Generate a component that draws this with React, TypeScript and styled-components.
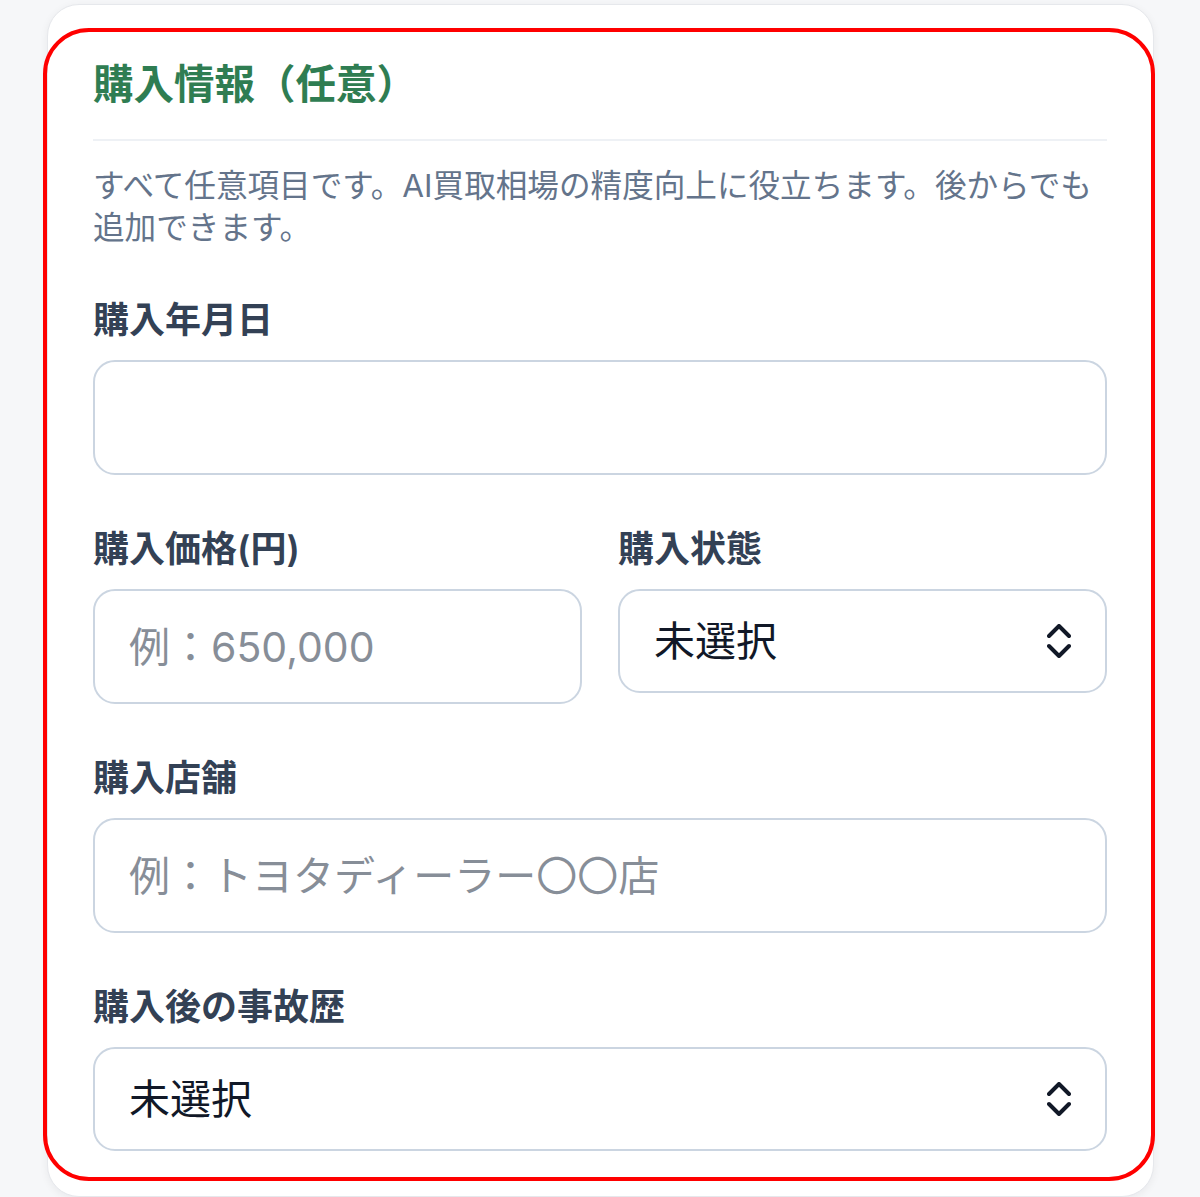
import React from "react";
import styled, { createGlobalStyle } from "styled-components";

const GlobalStyle = createGlobalStyle`
  html, body {
    margin: 0;
    padding: 0;
    background: #f6f7f9;
  }
  body {
    font-family: Inter, "Noto Sans CJK JP", sans-serif;
  }
  * { box-sizing: border-box; }
`;

const Card = styled.section`
  position: relative;
  margin: 4px 46px 0 47px;
  background: #ffffff;
  border: 1px solid #e6e8ec;
  border-radius: 32px;
  box-shadow: 0 2px 8px rgba(15, 23, 42, 0.06);
  padding: 55px 46px 45px 45px;
`;

const Highlight = styled.div`
  position: absolute;
  left: -5px;
  top: 23px;
  right: -2px;
  bottom: 15px;
  border: 4px solid #ff0000;
  border-radius: 46px;
  pointer-events: none;
`;

const Title = styled.h2`
  margin: 0;
  font-size: 40.5px;
  line-height: 50px;
  font-weight: 700;
  color: #2f7d52;
  padding-bottom: 29px;
  border-bottom: 2px solid #eef1f5;
`;

const Description = styled.p`
  margin: 24px 0 0;
  font-size: 31.6px;
  line-height: 42px;
  color: #64748b;
`;

const Form = styled.div`
  display: grid;
  row-gap: 49px;
  margin-top: 46px;
`;

const Row = styled.div`
  display: grid;
  grid-template-columns: 1fr 1fr;
  column-gap: 36px;
`;

const Field = styled.div`
  display: flex;
  flex-direction: column;
  gap: 15px;
  min-width: 0;
`;

const Label = styled.label`
  font-size: 36px;
  line-height: 50px;
  font-weight: 600;
  color: #334155;
`;

const TextInput = styled.input`
  width: 100%;
  height: 115px;
  border: 2px solid #cbd5e1;
  border-radius: 22px;
  background: #ffffff;
  padding: 0 34px;
  font-family: inherit;
  font-size: 41px;
  color: #111827;
  outline: none;
  &::placeholder {
    color: #878e98;
  }
`;

const SelectWrap = styled.div`
  position: relative;
  width: 100%;
`;

const Select = styled.select`
  width: 100%;
  height: 104px;
  appearance: none;
  -webkit-appearance: none;
  border: 2px solid #cbd5e1;
  border-radius: 22px;
  background: #ffffff;
  padding: 0 80px 0 34px;
  font-family: inherit;
  font-size: 41px;
  color: #111827;
  outline: none;
`;

const ChevronIcon = styled.svg`
  position: absolute;
  right: 36px;
  top: 50%;
  transform: translateY(-50%);
  pointer-events: none;
`;

const Chevrons = () => (
  <ChevronIcon
    width="24"
    height="34"
    viewBox="0 0 24 34"
    fill="none"
    stroke="#111827"
    strokeWidth="4"
    strokeLinecap="round"
    strokeLinejoin="round"
  >
    <path d="M2 12 L12 2 L22 12" />
    <path d="M2 22 L12 32 L22 22" />
  </ChevronIcon>
);

const SelectBox: React.FC<{ options: string[] }> = ({ options }) => (
  <SelectWrap>
    <Select defaultValue={options[0]}>
      {options.map((o) => (
        <option key={o} value={o}>
          {o}
        </option>
      ))}
    </Select>
    <Chevrons />
  </SelectWrap>
);

export default function App() {
  return (
    <>
      <GlobalStyle />
      <Card>
        <Title>購入情報（任意）</Title>
        <Description>
          すべて任意項目です。AI買取相場の精度向上に役立ちます。後からでも追加できます。
        </Description>
        <Form>
          <Field>
            <Label>購入年月日</Label>
            <TextInput type="text" />
          </Field>
          <Row>
            <Field>
              <Label>購入価格(円)</Label>
              <TextInput type="text" placeholder="例：650,000" />
            </Field>
            <Field>
              <Label>購入状態</Label>
              <SelectBox options={["未選択", "新車", "中古車"]} />
            </Field>
          </Row>
          <Field>
            <Label>購入店舗</Label>
            <TextInput type="text" placeholder="例：トヨタディーラー〇〇店" />
          </Field>
          <Field>
            <Label>購入後の事故歴</Label>
            <SelectBox options={["未選択", "なし", "あり"]} />
          </Field>
        </Form>
        <Highlight />
      </Card>
    </>
  );
}
